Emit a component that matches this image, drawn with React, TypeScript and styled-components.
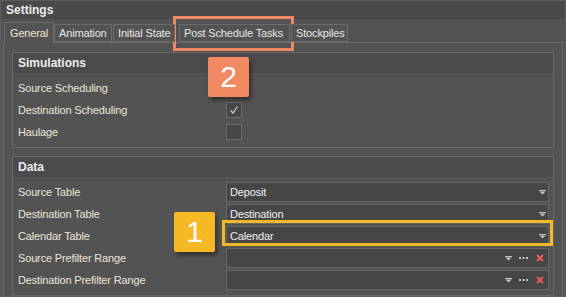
import React from "react";
import styled, { createGlobalStyle } from "styled-components";

const Global = createGlobalStyle`
  html, body { margin: 0; padding: 0; background: #535353; }
  body { font-family: "Liberation Sans", Arial, sans-serif; font-size: 11px; letter-spacing: -0.15px; }
`;

const Window = styled.div`
  position: relative;
  width: 566px;
  height: 297px;
  box-sizing: border-box;
  border: 1px solid #5c5c5c;
  background: #535353;
  overflow: hidden;
  color: #ebe7d6;
`;

const TitleBar = styled.div`
  height: 18px;
  background: #4a4a4a;
  display: flex;
  align-items: center;
  padding-left: 5px;
  font-weight: bold;
  font-size: 12px;
  letter-spacing: 0;
  color: #ececec;
`;

const Body = styled.div`
  padding: 3px 2px 0 2px;
  display: flex;
  flex-direction: column;
`;

const TabStrip = styled.div`
  display: flex;
  align-items: flex-end;
  height: 20px;
  position: relative;
  z-index: 1;
`;

const Tab = styled.div<{ $active?: boolean; $w: number; $ml?: number }>`
  box-sizing: border-box;
  width: ${(p) => p.$w}px;
  margin-left: ${(p) => p.$ml ?? 0}px;
  height: ${(p) => (p.$active ? "21px" : "18px")};
  margin-bottom: ${(p) => (p.$active ? "-1px" : "0")};
  padding: 0 0 0 ${(p) => (p.$active ? "5px" : "4px")};
  border: 1px solid #6a6a6a;
  border-bottom: ${(p) => (p.$active ? "none" : "1px solid #6a6a6a")};
  background: #535353;
  display: flex;
  align-items: center;
  color: ${(p) => (p.$active ? "#efe9d2" : "#e6e6e6")};
  white-space: nowrap;
  overflow: hidden;
`;

const Panel = styled.div`
  border: 1px solid #6a6a6a;
  padding: 9px 8px 3px 8px;
  display: flex;
  flex-direction: column;
  gap: 8px;
`;

const Group = styled.div`
  border: 1px solid #686868;
`;

const GroupHeader = styled.div`
  height: 20px;
  background: #4b4b4b;
  display: flex;
  align-items: center;
  padding-left: 5px;
  font-weight: bold;
  font-size: 12px;
  letter-spacing: 0;
  color: #ececec;
`;

const GroupBody = styled.div`
  padding: 4px 4px 4px 5px;
  display: flex;
  flex-direction: column;
`;

const Row = styled.div`
  height: 22px;
  display: grid;
  grid-template-columns: 208px 1fr;
  align-items: center;
`;

const Label = styled.div`
  color: #ebe7d6;
  white-space: nowrap;
`;

const Check = styled.div`
  width: 16px;
  height: 16px;
  box-sizing: border-box;
  border: 1px solid #6a6a6a;
  background: #474747;
  display: flex;
  align-items: center;
  justify-content: center;
`;

const Field = styled.div`
  height: 20px;
  box-sizing: border-box;
  border: 1px solid #666666;
  background: #464646;
  display: flex;
  align-items: center;
  padding: 0 2px 0 3px;
  color: #efefef;
`;

const FieldText = styled.span`
  flex: 1;
`;

const IconBox = styled.span<{ $ml?: number; $mr?: number }>`
  display: flex;
  align-items: center;
  margin-left: ${(p) => p.$ml ?? 0}px;
  margin-right: ${(p) => p.$mr ?? 0}px;
`;

const Highlight = styled.div<{ $color: string }>`
  position: absolute;
  box-sizing: border-box;
  border: 3px solid ${(p) => p.$color};
  pointer-events: none;
`;

const Badge = styled.div<{ $color: string }>`
  position: absolute;
  width: 41px;
  height: 40px;
  background: ${(p) => p.$color};
  border-radius: 2px;
  box-shadow: 2px 3px 4px rgba(0, 0, 0, 0.45);
  color: #ffffff;
  font-family: "Liberation Sans", Arial, sans-serif;
  font-size: 30px;
  letter-spacing: 0;
  display: flex;
  align-items: center;
  justify-content: center;
`;

const Arrow = () => (
  <svg width="7" height="5" viewBox="0 0 7 5">
    <rect x="0" y="0" width="7" height="1" fill="#c4c4c4" />
    <polygon points="0.5,1.5 6.5,1.5 3.5,4.5" fill="#c4c4c4" />
  </svg>
);

const Dots = () => (
  <svg width="9" height="2" viewBox="0 0 9 2">
    <rect x="0" y="0" width="2" height="2" fill="#c4c4c4" />
    <rect x="3.5" y="0" width="2" height="2" fill="#c4c4c4" />
    <rect x="7" y="0" width="2" height="2" fill="#c4c4c4" />
  </svg>
);

const Clear = () => (
  <svg width="8" height="8" viewBox="0 0 8 8">
    <path d="M1 1 L7 7 M7 1 L1 7" stroke="#ee5b5b" strokeWidth="2" />
  </svg>
);

const CheckMark = () => (
  <svg width="10" height="10" viewBox="0 0 10 10">
    <path d="M1.5 5.5 L4 8 L8.5 1.5" stroke="#d0d0d0" strokeWidth="1.2" fill="none" />
  </svg>
);

type FieldRow = { label: string; value: string; extra?: boolean };

const dataRows: FieldRow[] = [
  { label: "Source Table", value: "Deposit" },
  { label: "Destination Table", value: "Destination" },
  { label: "Calendar Table", value: "Calendar" },
  { label: "Source Prefilter Range", value: "", extra: true },
  { label: "Destination Prefilter Range", value: "", extra: true },
];

export default function App() {
  return (
    <>
      <Global />
      <Window>
        <TitleBar>Settings</TitleBar>
        <Body>
          <TabStrip>
            <Tab $active $w={50} $ml={1}>General</Tab>
            <Tab $w={58}>Animation</Tab>
            <Tab $w={62} $ml={1}>Initial State</Tab>
            <Tab $w={111} $ml={4}>Post Schedule Tasks</Tab>
            <Tab $w={57} $ml={1}>Stockpiles</Tab>
          </TabStrip>
          <Panel>
            <Group>
              <GroupHeader>Simulations</GroupHeader>
              <GroupBody>
                <Row>
                  <Label>Source Scheduling</Label>
                  <span />
                </Row>
                <Row>
                  <Label>Destination Scheduling</Label>
                  <Check>
                    <CheckMark />
                  </Check>
                </Row>
                <Row>
                  <Label>Haulage</Label>
                  <Check />
                </Row>
              </GroupBody>
            </Group>
            <Group>
              <GroupHeader>Data</GroupHeader>
              <GroupBody>
                {dataRows.map((r) => (
                  <Row key={r.label}>
                    <Label>{r.label}</Label>
                    <Field>
                      <FieldText>{r.value}</FieldText>
                      {r.extra ? (
                        <>
                          <IconBox>
                            <Arrow />
                          </IconBox>
                          <IconBox $ml={7}>
                            <Dots />
                          </IconBox>
                          <IconBox $ml={8} $mr={2}>
                            <Clear />
                          </IconBox>
                        </>
                      ) : (
                        <IconBox>
                          <Arrow />
                        </IconBox>
                      )}
                    </Field>
                  </Row>
                ))}
              </GroupBody>
            </Group>
          </Panel>
        </Body>
        <Highlight $color="#f18662" style={{ left: 172, top: 15, width: 121, height: 35 }} />
        <Badge $color="#f18a62" style={{ left: 207, top: 56 }}>2</Badge>
        <Highlight $color="#f4b924" style={{ left: 221, top: 219, width: 331, height: 26 }} />
        <Badge $color="#f4b924" style={{ left: 173, top: 211 }}>1</Badge>
      </Window>
    </>
  );
}
